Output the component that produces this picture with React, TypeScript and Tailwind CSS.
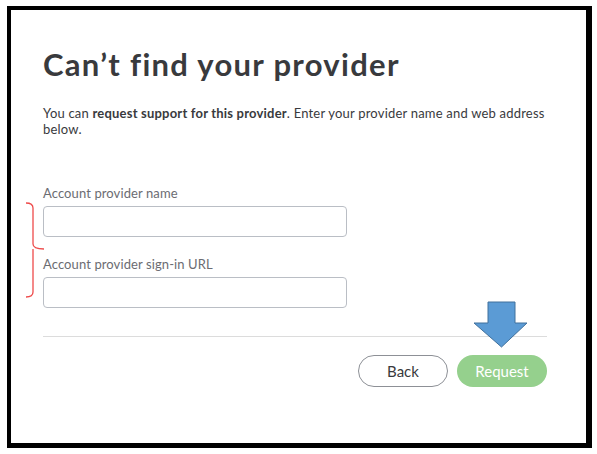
import React from 'react';

export default function App() {
  return (
    <div className="w-[597px] h-[454px] bg-white pt-[6px] pl-[7px]" style={{ fontFamily: 'Lato, "Open Sans", sans-serif' }}>
      <div className="relative w-[585px] h-[442px] border-[4px] border-r-[6px] border-b-[5px] border-black bg-white">
        <div className="pl-[32px] pr-[39px] pt-[36px]">
          <h1 className="text-[31px] leading-[36px] font-bold text-[#393a3d] tracking-[1.3px]">Can’t find your provider</h1>
          <p className="mt-[23px] text-[13px] leading-[16px] text-[#393a3d] tracking-[0.2px]">
            You can <b className="font-bold">request support for this provider</b>. Enter your provider name and web address below.
          </p>

          <div className="mt-[48px] flex flex-col">
            <label className="text-[13px] leading-[16px] text-[#6b6c72] tracking-[0.1px]">Account provider name</label>
            <input className="mt-[5px] w-[304px] h-[31px] rounded-[4px] border border-[#babec5] outline-none" />
            <label className="mt-[19px] text-[13px] leading-[16px] text-[#6b6c72] tracking-[0.1px]">Account provider sign-in URL</label>
            <input className="mt-[5px] w-[304px] h-[31px] rounded-[4px] border border-[#babec5] outline-none" />
          </div>

          <div className="mt-[28px] h-px bg-[#dcdcdc]" />

          <div className="mt-[18px] flex justify-end gap-[9px]">
            <button className="w-[90px] h-[32px] rounded-full border border-[#8d9096] text-[15px] text-[#393a3d] bg-white">Back</button>
            <button className="w-[90px] h-[32px] rounded-full bg-[#95d08d] text-[15px] text-white">Request</button>
          </div>
        </div>

        {/* red brace annotation */}
        <svg className="absolute left-[12px] top-[192px]" width="22" height="98" viewBox="0 0 22 98">
          <path d="M3 1 Q10 1 10 6 L10 42 Q10 47 21 47 M10 47 Q10 47 10 52 L10 90 Q10 95 3 95" fill="none" stroke="#ee4b4b" strokeWidth="1.3" />
        </svg>

        {/* blue arrow */}
        <svg className="absolute left-[462px] top-[291px]" width="56" height="48" viewBox="0 0 56 48">
          <path d="M15 1 H42 V22 H54 L28.5 46 L1 22 H15 Z" fill="#5b9bd5" stroke="#41719c" strokeWidth="1" />
        </svg>
      </div>
    </div>
  );
}
